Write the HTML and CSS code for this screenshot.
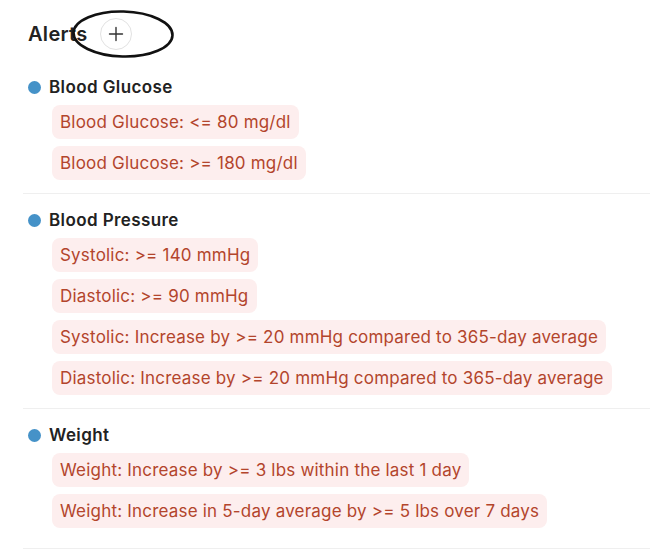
FILE: index.html
```html
<!DOCTYPE html>
<html lang="en">
<head>
    <meta charset="UTF-8">
    <meta name="viewport" content="width=device-width, initial-scale=1.0">
    <title>Alerts</title>
    <link rel="stylesheet" href="styles.css">
</head>
<body>
    <div class="alerts">
        <div class="alerts-header">
            <h1>Alerts</h1>
            <button class="add-btn" aria-label="Add alert">
                <svg width="16" height="16" viewBox="0 0 16 16">
                    <path d="M8 1.5v13M1.5 8h13" stroke="#333" stroke-width="1.4" stroke-linecap="round" fill="none"/>
                </svg>
            </button>
            <!-- annotation circled around the add button -->
            <svg class="mark" width="104" height="52" viewBox="0 0 104 52">
                <ellipse cx="52" cy="25" rx="49.5" ry="22.5" fill="none" stroke="#111" stroke-width="2.6" transform="rotate(1.5 52 25)"/>
            </svg>
        </div>

        <!-- Blood Glucose -->
        <div class="group">
            <h2><span class="dot"></span>Blood Glucose</h2>
            <div class="rules">
                <span class="rule">Blood Glucose: &lt;= 80 mg/dl</span>
                <span class="rule">Blood Glucose: &gt;= 180 mg/dl</span>
            </div>
        </div>

        <!-- Blood Pressure -->
        <div class="group">
            <h2><span class="dot"></span>Blood Pressure</h2>
            <div class="rules">
                <span class="rule">Systolic: &gt;= 140 mmHg</span>
                <span class="rule">Diastolic: &gt;= 90 mmHg</span>
                <span class="rule">Systolic: Increase by &gt;= 20 mmHg compared to 365-day average</span>
                <span class="rule">Diastolic: Increase by &gt;= 20 mmHg compared to 365-day average</span>
            </div>
        </div>

        <!-- Weight -->
        <div class="group last">
            <h2><span class="dot"></span>Weight</h2>
            <div class="rules">
                <span class="rule">Weight: Increase by &gt;= 3 lbs within the last 1 day</span>
                <span class="rule">Weight: Increase in 5-day average by &gt;= 5 lbs over 7 days</span>
            </div>
        </div>
    </div>
</body>
</html>
```
FILE: styles.css
```css
body { margin: 0; font-family: Inter, "DejaVu Sans", sans-serif; background: #fff; color: #222; }
.alerts { padding-left: 23px; }
.alerts-header { position: relative; display: flex; align-items: center; gap: 12px; height: 32px; margin-top: 18px; margin-bottom: 11px; padding-left: 5px; }
.alerts-header h1 { margin: 0; font-size: 20px; font-weight: 600; letter-spacing: 0.3px; color: #222; }
.add-btn { width: 32px; height: 32px; padding: 0; border: 1px solid #e2e2e2; border-radius: 50%; background: #fff; display: flex; align-items: center; justify-content: center; }
.mark { position: absolute; left: 48px; top: -9px; }
.group { padding: 14px 0 13px 5px; border-bottom: 1px solid #efefef; }
.group.last { padding-bottom: 20px; }
.group h2 { margin: 0; height: 24px; display: flex; align-items: center; gap: 8px; font-size: 17px; font-weight: 600; letter-spacing: 0.4px; color: #222; }
.dot { width: 13px; height: 13px; border-radius: 50%; background: #4592c8; flex-shrink: 0; }
.rules { display: flex; flex-direction: column; align-items: flex-start; gap: 7px; margin-top: 6px; padding-left: 24px; }
.rule { display: inline-block; height: 34px; line-height: 34px; padding: 0 8px; border-radius: 8px; background: #fdeeee; color: #b3452c; font-size: 17px; letter-spacing: 0.2px; white-space: nowrap; }
```
